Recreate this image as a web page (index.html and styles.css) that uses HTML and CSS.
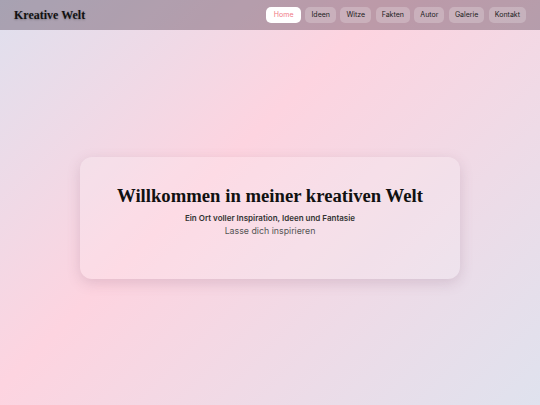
FILE: index.html
```html
<!DOCTYPE html>
<html lang="de">
<head>
<meta charset="utf-8">
<title>Kreative Welt</title>
<link rel="stylesheet" href="styles.css">
</head>
<body>
<header class="topbar">
  <div class="logo">Kreative Welt</div>
  <nav class="nav">
    <a class="nav-btn active" href="#">Home</a>
    <a class="nav-btn" href="#">Ideen</a>
    <a class="nav-btn" href="#">Witze</a>
    <a class="nav-btn" href="#">Fakten</a>
    <a class="nav-btn" href="#">Autor</a>
    <a class="nav-btn" href="#">Galerie</a>
    <a class="nav-btn" href="#">Kontakt</a>
  </nav>
</header>
<main class="hero">
  <section class="card">
    <h1 class="title">Willkommen in meiner kreativen Welt</h1>
    <p class="subtitle">Ein Ort voller Inspiration, Ideen und Fantasie</p>
    <p class="tagline">Lasse dich inspirieren</p>
  </section>
</main>
</body>
</html>
```
FILE: styles.css
```css
* { box-sizing: border-box; }
html, body { margin: 0; padding: 0; height: 100%; }
body {
  font-family: Inter, "Noto Sans", sans-serif;
  background: linear-gradient(135deg, #dfe0ee 0%, #fdd4e0 41%, #dfe2ee 100%);
  min-height: 405px;
  display: flex;
  flex-direction: column;
  color: #222;
}
.topbar {
  height: 30px;
  flex: none;
  display: flex;
  align-items: center;
  justify-content: space-between;
  padding: 0 14px 0 14px;
  background: rgba(40, 20, 40, 0.3);
}
.logo {
  font-family: "Liberation Serif", serif;
  font-weight: bold;
  font-size: 12px;
  color: #111;
  text-shadow: 0 1px 2px rgba(0,0,0,0.25);
}
.nav { display: flex; gap: 4.5px; }
.nav-btn {
  display: block;
  height: 16px;
  line-height: 16px;
  padding: 0 6px;
  font-size: 7px;
  color: #222;
  text-decoration: none;
  background: rgba(255, 255, 255, 0.22);
  border-radius: 5px;
}
.nav-btn.active {
  background: #fff;
  color: #f07a86;
  padding: 0 7.5px;
}
.hero {
  flex: 1;
  display: flex;
  align-items: center;
  justify-content: center;
}
.card {
  width: 380px;
  height: 122px;
  padding-bottom: 14px;
  border-radius: 12px;
  background: rgba(255, 255, 255, 0.18);
  box-shadow: 0 4px 14px rgba(120, 80, 110, 0.2);
  display: flex;
  flex-direction: column;
  align-items: center;
  justify-content: center;
  text-align: center;
}
.title {
  margin: 0 0 5px;
  font-family: "Liberation Serif", serif;
  font-weight: bold;
  font-size: 18.7px;
  line-height: 1.2;
  color: #111;
}
.subtitle {
  margin: 0;
  font-size: 8px;
  font-weight: 600;
  color: #333;
}
.tagline {
  margin: 2px 0 0;
  font-size: 8.8px;
  color: #555;
}
```
